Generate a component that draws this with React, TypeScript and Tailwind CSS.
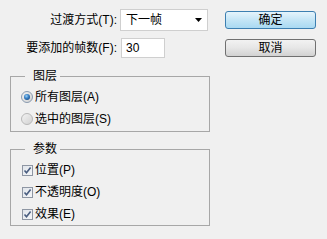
import React from "react";

const FONT = '"Liberation Sans", "Noto Sans CJK SC", sans-serif';

function Radio({ checked }: { checked: boolean }) {
  return (
    <svg width="12" height="12" viewBox="0 0 12 12" className="shrink-0">
      <defs>
        <linearGradient id={checked ? "rg1" : "rg0"} x1="0" y1="0" x2="1" y2="1">
          <stop offset="0" stopColor="#f4f4f4" />
          <stop offset="1" stopColor="#d0d0d0" />
        </linearGradient>
        <radialGradient id="dot" cx="0.4" cy="0.35" r="0.7">
          <stop offset="0" stopColor="#9fd2f4" />
          <stop offset="0.5" stopColor="#3a83c8" />
          <stop offset="1" stopColor="#1a4f8c" />
        </radialGradient>
      </defs>
      <circle cx="6" cy="6" r="5.5" fill={`url(#${checked ? "rg1" : "rg0"})`} stroke={checked ? "#8a9bb0" : "#b8b8b8"} strokeWidth="1" />
      {checked && <circle cx="6" cy="6" r="3" fill="url(#dot)" />}
    </svg>
  );
}

function Check() {
  return (
    <svg width="11" height="11" viewBox="0 0 11 11" className="shrink-0">
      <defs>
        <linearGradient id="cb" x1="0" y1="0" x2="1" y2="1">
          <stop offset="0" stopColor="#dfe4ea" />
          <stop offset="1" stopColor="#f6f7f9" />
        </linearGradient>
      </defs>
      <rect x="0.5" y="0.5" width="10" height="10" fill="url(#cb)" stroke="#8e96a3" />
      <path d="M2.5 5.5 L4.5 7.8 L8.6 2.6" fill="none" stroke="#4a5e80" strokeWidth="1.6" />
    </svg>
  );
}

export default function App() {
  return (
    <div
      className="flex w-[327px] h-[239px] bg-[#f0f0f0] text-[12px] leading-[14px] text-black overflow-hidden"
      style={{ fontFamily: FONT }}
    >
      <div className="w-[210px] pl-[10px] pt-[9px] flex flex-col">
        <div className="flex items-center h-[22px]">
          <div className="w-[108px] text-right pr-px">过渡方式(T):</div>
          <div className="ml-[2px] w-[88px] h-[22px] bg-white border border-[#cfcfcf] flex items-center pl-[5px] pr-[5px]">
            <span className="flex-1">下一帧</span>
            <svg width="7" height="4" viewBox="0 0 7 4">
              <path d="M0 0 H7 L3.5 4 Z" fill="#000" />
            </svg>
          </div>
        </div>
        <div className="flex items-center h-[20px] mt-[7px]">
          <div className="w-[108px] text-right pr-px">要添加的帧数(F):</div>
          <div className="ml-[3px] w-[44px] h-[20px] bg-white border border-[#cfcfcf] flex items-center pl-[4px]">
            30
          </div>
        </div>

        <fieldset className="mt-[11px] w-[200px] border border-[#a7a7a7] pl-[10px] pt-[3px] pb-px">
          <legend className="ml-[4px] pl-[8px] pr-[3px]">图层</legend>
          <div className="flex items-center h-[22px] gap-[2px]">
            <Radio checked />
            <span>所有图层(A)</span>
          </div>
          <div className="flex items-center h-[22px] gap-[2px]">
            <Radio checked={false} />
            <span>选中的图层(S)</span>
          </div>
        </fieldset>

        <fieldset className="mt-[10px] w-[200px] border border-[#a7a7a7] pl-[11px] pt-[3px]">
          <legend className="ml-[3px] pl-[8px] pr-[3px]">参数</legend>
          <div className="flex items-center h-[22px] gap-[2px]">
            <Check />
            <span>位置(P)</span>
          </div>
          <div className="flex items-center h-[22px] gap-[2px]">
            <Check />
            <span>不透明度(O)</span>
          </div>
          <div className="flex items-center h-[22px] gap-[2px]">
            <Check />
            <span>效果(E)</span>
          </div>
        </fieldset>
      </div>

      <div className="pl-[15px] pt-[11px] flex flex-col gap-[10px]">
        <button className="w-[91px] h-[18px] rounded-[3px] border border-[#3c7fb1] bg-gradient-to-b from-[#e5f4fc] via-[#c4e5f6] to-[#a9d9f2] flex items-center justify-center leading-none">
          确定
        </button>
        <button className="w-[91px] h-[18px] rounded-[3px] border border-[#707070] bg-gradient-to-b from-[#f2f2f2] via-[#e6e6e6] to-[#d2d2d2] flex items-center justify-center leading-none">
          取消
        </button>
      </div>
    </div>
  );
}
